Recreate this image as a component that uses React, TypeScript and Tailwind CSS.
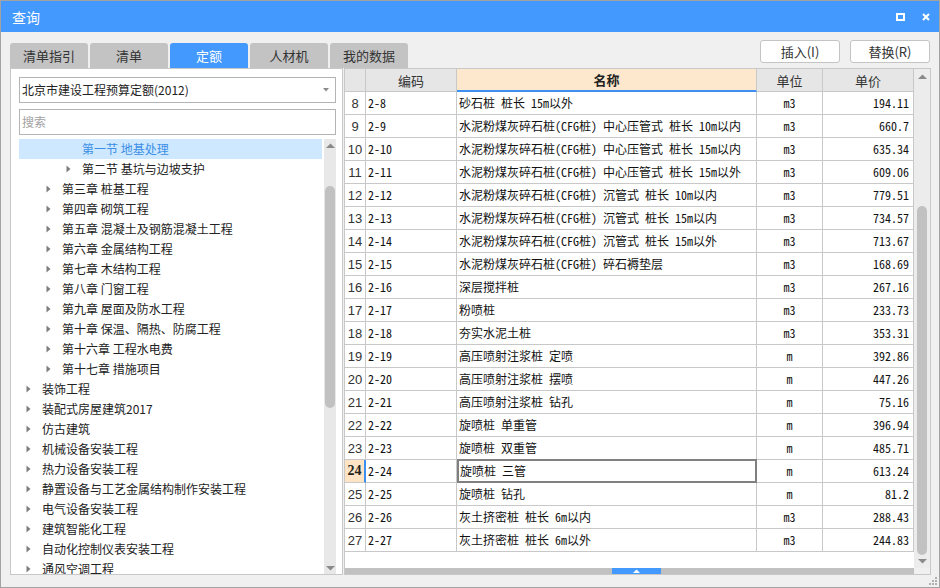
import React from 'react';

// 查詢視窗：左側定額章節樹，右側定額子目表格

const UI_FONT = "font-['Noto_Sans_CJK_SC',sans-serif]";
const CELL_FONT = "font-['Noto_Sans_Mono_CJK_SC','Noto_Sans_CJK_SC',monospace]";

interface TreeItem {
  level: 0 | 1 | 2;
  text: string;
  leaf?: boolean;
  selected?: boolean;
}

const TREE_ITEMS: TreeItem[] = [
  { level: 2, text: '第一节 地基处理', leaf: true, selected: true },
  { level: 2, text: '第二节 基坑与边坡支护' },
  { level: 1, text: '第三章 桩基工程' },
  { level: 1, text: '第四章 砌筑工程' },
  { level: 1, text: '第五章 混凝土及钢筋混凝土工程' },
  { level: 1, text: '第六章 金属结构工程' },
  { level: 1, text: '第七章 木结构工程' },
  { level: 1, text: '第八章 门窗工程' },
  { level: 1, text: '第九章 屋面及防水工程' },
  { level: 1, text: '第十章 保温、隔热、防腐工程' },
  { level: 1, text: '第十六章 工程水电费' },
  { level: 1, text: '第十七章 措施项目' },
  { level: 0, text: '装饰工程' },
  { level: 0, text: '装配式房屋建筑2017' },
  { level: 0, text: '仿古建筑' },
  { level: 0, text: '机械设备安装工程' },
  { level: 0, text: '热力设备安装工程' },
  { level: 0, text: '静置设备与工艺金属结构制作安装工程' },
  { level: 0, text: '电气设备安装工程' },
  { level: 0, text: '建筑智能化工程' },
  { level: 0, text: '自动化控制仪表安装工程' },
  { level: 0, text: '通风空调工程' },
];

const INDENT = ['pl-[7px]', 'pl-[27px]', 'pl-[47px]'];

// [行號, 編碼, 名稱, 單位, 單價]
const ROWS: [number, string, string, string, string][] = [
  [8, '2-8', '砂石桩 桩长 15m以外', 'm3', '194.11'],
  [9, '2-9', '水泥粉煤灰碎石桩(CFG桩) 中心压管式 桩长 10m以内', 'm3', '660.7'],
  [10, '2-10', '水泥粉煤灰碎石桩(CFG桩) 中心压管式 桩长 15m以内', 'm3', '635.34'],
  [11, '2-11', '水泥粉煤灰碎石桩(CFG桩) 中心压管式 桩长 15m以外', 'm3', '609.06'],
  [12, '2-12', '水泥粉煤灰碎石桩(CFG桩) 沉管式 桩长 10m以内', 'm3', '779.51'],
  [13, '2-13', '水泥粉煤灰碎石桩(CFG桩) 沉管式 桩长 15m以内', 'm3', '734.57'],
  [14, '2-14', '水泥粉煤灰碎石桩(CFG桩) 沉管式 桩长 15m以外', 'm3', '713.67'],
  [15, '2-15', '水泥粉煤灰碎石桩(CFG桩) 碎石褥垫层', 'm3', '168.69'],
  [16, '2-16', '深层搅拌桩', 'm3', '267.16'],
  [17, '2-17', '粉喷桩', 'm3', '233.73'],
  [18, '2-18', '夯实水泥土桩', 'm3', '353.31'],
  [19, '2-19', '高压喷射注浆桩 定喷', 'm', '392.86'],
  [20, '2-20', '高压喷射注浆桩 摆喷', 'm', '447.26'],
  [21, '2-21', '高压喷射注浆桩 钻孔', 'm', '75.16'],
  [22, '2-22', '旋喷桩 单重管', 'm', '396.94'],
  [23, '2-23', '旋喷桩 双重管', 'm', '485.71'],
  [24, '2-24', '旋喷桩 三管', 'm', '613.24'],
  [25, '2-25', '旋喷桩 钻孔', 'm', '81.2'],
  [26, '2-26', '灰土挤密桩 桩长 6m以内', 'm3', '288.43'],
  [27, '2-27', '灰土挤密桩 桩长 6m以外', 'm3', '244.83'],
];

const CURRENT_ROW = 24;

const TABS = ['清单指引', '清单', '定额', '人材机', '我的数据'];

const ArrowRight = () => (
  <svg width="5" height="8" viewBox="0 0 5 8">
    <polygon points="0.5,0.5 4.5,4 0.5,7.5" fill="#7d7d7d" />
  </svg>
);

const ArrowUp = () => (
  <svg width="9" height="5" viewBox="0 0 9 5">
    <polygon points="0,5 4.5,0.5 9,5" fill="#8a8a8a" />
  </svg>
);

const ArrowDown = () => (
  <svg width="9" height="5" viewBox="0 0 9 5">
    <polygon points="0,0 9,0 4.5,4.5" fill="#8a8a8a" />
  </svg>
);

const TitleBar = () => (
  <div className="h-[31px] bg-[#4499fe] flex items-center pl-[11px] pr-[9px]">
    <span className={`${UI_FONT} text-[14px] text-white leading-none`}>查询</span>
    <div className="ml-auto flex items-center gap-[17px]">
      <svg width="9" height="8" viewBox="0 0 9 8">
        <rect x="1" y="1" width="7" height="6" fill="none" stroke="#fff" strokeWidth="2" />
      </svg>
      <svg width="8" height="8" viewBox="0 0 8 8">
        <path d="M1 1 L7 7 M7 1 L1 7" stroke="#fff" strokeWidth="2" />
      </svg>
    </div>
  </div>
);

const Toolbar = () => (
  <div className="h-[36px] flex pl-[9px] pr-[9px]">
    <div className="flex gap-[2px] mt-[11px]">
      {TABS.map((t) => (
        <div
          key={t}
          className={`w-[78px] h-[25px] rounded-t-[3px] flex items-center justify-center ${UI_FONT} text-[13px] leading-none ${
            t === '定额' ? 'bg-[#4499fe] text-white' : 'bg-[#c3c3c3] text-[#333]'
          }`}
        >
          {t}
        </div>
      ))}
    </div>
    <div className="ml-auto flex gap-[10px] mt-[8px]">
      {['插入(I)', '替换(R)'].map((b) => (
        <div
          key={b}
          className={`w-[80px] h-[23px] bg-white border border-[#c4c4c4] rounded-[3px] flex items-center justify-center ${UI_FONT} text-[13px] text-[#333] leading-none`}
        >
          {b}
        </div>
      ))}
    </div>
  </div>
);

const TreePanel = () => (
  <div className="w-[333px] h-full bg-white border border-[#c8c8c8] flex flex-col pl-[8px] pr-[6px] pt-[8px]">
    {/* 定額庫下拉框 */}
    <div className="h-[26px] border border-[#b4b4b4] flex items-center pl-[2px] pr-[6px]">
      <span className={`${UI_FONT} text-[12px] text-[#222] leading-none`}>北京市建设工程预算定额(2012)</span>
      <svg className="ml-auto" width="6" height="4" viewBox="0 0 6 4">
        <polygon points="0,0 6,0 3,3.5" fill="#8a8a8a" />
      </svg>
    </div>
    {/* 搜索框 */}
    <div className="h-[26px] mt-[6px] border border-[#b4b4b4] flex items-center pl-[2px]">
      <span className={`${UI_FONT} text-[12px] text-[#a3a3a3] leading-none`}>搜索</span>
    </div>
    {/* 章節樹 */}
    <div className="flex-1 mt-[4px] flex gap-[2px] min-h-0">
      <div className="w-[304px] overflow-hidden">
        {TREE_ITEMS.map((it) => (
          <div
            key={it.text}
            className={`h-[20px] flex items-center ${INDENT[it.level]} ${it.selected ? 'bg-[#cde8ff]' : ''}`}
          >
            <span className="w-[16px] flex items-center">{!it.leaf && <ArrowRight />}</span>
            <span
              className={`${UI_FONT} text-[12px] leading-none whitespace-nowrap ${
                it.selected ? 'text-[#3b8fe6]' : 'text-[#222]'
              }`}
            >
              {it.text}
            </span>
          </div>
        ))}
      </div>
      <div className="w-[12px] bg-[#e8e8e8] flex flex-col items-center">
        <div className="h-[13px] flex items-center">
          <ArrowUp />
        </div>
        <div className="h-[34px]" />
        <div className="w-[10px] h-[222px] rounded-full bg-[#c1c1c1]" />
        <div className="flex-1" />
        <div className="h-[12px] flex items-center">
          <ArrowDown />
        </div>
      </div>
    </div>
  </div>
);

const COLS = ['w-[21px]', 'w-[91px]', 'w-[300px]', 'w-[66px]', 'w-[91px]'];

const GridTable = () => (
  <div className="w-[587px] h-full bg-white border border-[#c8c8c8] flex flex-col">
    <div className="flex flex-1 min-h-0">
      <div className="w-[569px] flex flex-col">
        {/* 表頭 */}
        <div className={`h-[23px] flex ${UI_FONT} text-[13px] text-[#333] leading-none`}>
          <div className={`${COLS[0]} bg-[#e6e6e6] border-r border-b border-[#c8c8c8]`} />
          <div className={`${COLS[1]} bg-[#e6e6e6] border-r border-b border-[#c8c8c8] flex items-center justify-center`}>编码</div>
          <div className={`${COLS[2]} bg-[#fee8cd] border-r border-r-[#c8c8c8] border-b-2 border-b-[#3d8ff2] flex items-center justify-center font-bold text-[#222]`}>名称</div>
          <div className={`${COLS[3]} bg-[#e6e6e6] border-r border-b border-[#c8c8c8] flex items-center justify-center`}>单位</div>
          <div className={`${COLS[4]} bg-[#e6e6e6] border-r border-b border-[#c8c8c8] flex items-center justify-center`}>单价</div>
        </div>
        {/* 數據行 */}
        {ROWS.map(([no, code, name, unit, price]) => {
          const cur = no === CURRENT_ROW;
          return (
            <div key={no} className="h-[23px] flex text-[12px] text-[#111] leading-none">
              {cur ? (
                <div className={`${COLS[0]} bg-[#fee4c4] border-b border-b-[#c8c8c8] border-r-2 border-r-[#3d8ff2] flex items-center justify-center font-bold font-['Liberation_Serif',serif] text-[14px] text-[#222]`}>
                  {no}
                </div>
              ) : (
                <div className={`${COLS[0]} border-r border-b border-[#c8c8c8] flex items-center justify-center font-['Liberation_Sans',sans-serif] text-[13px] text-[#333]`}>
                  {no}
                </div>
              )}
              <div className={`${COLS[1]} ${CELL_FONT} border-r border-b border-[#c8c8c8] flex items-center pl-[2px]`}>{code}</div>
              {cur ? (
                <div className={`${COLS[2]} ${CELL_FONT} h-[24px] -mt-px border-2 border-[#808080] flex items-center whitespace-nowrap pl-[1px]`}>
                  {name}
                </div>
              ) : (
                <div className={`${COLS[2]} ${CELL_FONT} border-r border-b border-[#c8c8c8] flex items-center whitespace-nowrap pl-[2px]`}>
                  {name}
                </div>
              )}
              <div className={`${COLS[3]} ${CELL_FONT} border-r border-b border-[#c8c8c8] flex items-center justify-center`}>{unit}</div>
              <div className={`${COLS[4]} ${CELL_FONT} border-r border-b border-[#c8c8c8] flex items-center justify-end pr-[4px]`}>{price}</div>
            </div>
          );
        })}
      </div>
      {/* 垂直滾動條 */}
      <div className="w-[16px] bg-[#ececec] flex flex-col items-center">
        <div className="h-[14px] flex items-center">
          <ArrowUp />
        </div>
        <div className="h-[123px]" />
        <div className="w-[10px] h-[349px] rounded-full bg-[#c1c1c1]" />
        <div className="flex-1" />
        <div className="h-[13px] flex items-center">
          <ArrowDown />
        </div>
      </div>
    </div>
    {/* 水平滾動條 */}
    <div className="h-[6px] flex">
      <div className="w-[569px] bg-[#c1c1c1] flex">
        <div className="ml-[267px] w-[49px] h-full bg-[#4499fe] flex items-center justify-center">
          <svg width="7" height="4" viewBox="0 0 7 4">
            <polygon points="0,4 3.5,0.5 7,4" fill="#fff" />
          </svg>
        </div>
      </div>
      <div className="flex-1 bg-[#f0f0f0]" />
    </div>
  </div>
);

export default function App() {
  return (
    <div className="w-[940px] h-[588px] bg-[#f0f0f0] border border-[#a3a3a3] flex flex-col overflow-hidden relative">
      <TitleBar />
      <Toolbar />
      <div className="h-[507px] flex pl-[9px] gap-[1px]">
        <TreePanel />
        <GridTable />
      </div>
      {/* 右下角調整大小手柄 */}
      <svg className="absolute right-[2px] bottom-[2px]" width="8" height="8" viewBox="0 0 8 8">
        <rect x="6" y="0" width="2" height="2" fill="#b0b0b0" />
        <rect x="3" y="3" width="2" height="2" fill="#b0b0b0" />
        <rect x="6" y="3" width="2" height="2" fill="#b0b0b0" />
        <rect x="0" y="6" width="2" height="2" fill="#b0b0b0" />
        <rect x="3" y="6" width="2" height="2" fill="#b0b0b0" />
        <rect x="6" y="6" width="2" height="2" fill="#b0b0b0" />
      </svg>
    </div>
  );
}
